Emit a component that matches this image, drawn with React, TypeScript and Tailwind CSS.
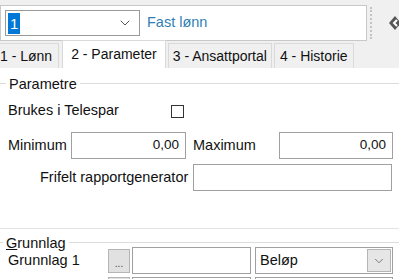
import { ChevronDown } from "lucide-react";

const font = { fontFamily: '"Liberation Sans", Arial, sans-serif' };

function Input({ value, className }: { value?: string; className: string }) {
  return (
    <div
      className={`flex h-[27px] items-center justify-end border border-[#a0a0a0] bg-white px-1.5 text-[13.5px] text-[#111] ${className}`}
    >
      {value}
    </div>
  );
}

export default function App() {
  return (
    <div className="h-[279px] w-[399px] overflow-hidden bg-white text-[14.5px] text-[#111]" style={font}>
      {/* top strip */}
      <div className="flex h-[41px] items-stretch bg-[#f0f0f0] pt-[5px]">
        <div className="flex w-[367px] items-center border border-[#c8c8c8] bg-white pl-[4px]">
          <div className="flex h-[26px] w-[135px] items-center border border-[#9a9a9a] bg-white pl-[2px] pr-[6px]">
            <span className="bg-[#0078d7] px-[2px] text-[15px] leading-[21px] text-white">1</span>
            <ChevronDown className="ml-auto h-4 w-4 text-[#555]" strokeWidth={1.5} />
          </div>
          <span className="ml-[7px] text-[14.5px] text-[#2f7fb5]">Fast lønn</span>
        </div>
        <div className="ml-[3px] mt-[2px] h-[32px] border-l-2 border-dotted border-[#c4c4c4]" />
        <div className="flex flex-1 items-center justify-end">
          <svg width="14" height="16" viewBox="0 0 14 16" className="mr-[-3px]">
            <path d="M7 1 L13 8 L7 15 L1 8 Z" fill="#555" />
            <path d="M9 5 L6 8 L9 11" stroke="#fff" strokeWidth="2" fill="none" />
          </svg>
        </div>
      </div>

      {/* tabs */}
      <div className="flex h-[27px] items-end bg-[#f0f0f0] text-[14px]">
        <div className="ml-[-4px] flex h-[25px] items-center border border-b-0 border-[#d9d9d9] bg-[#f0f0f0] pl-[3px] pr-[6px]">
          1 - Lønn
        </div>
        <div className="ml-[3px] flex h-[28px] items-center border border-b-0 border-[#d9d9d9] bg-white px-[8px]">
          2 - Parameter
        </div>
        <div className="ml-[2px] flex h-[25px] items-center border border-b-0 border-[#d9d9d9] bg-[#f0f0f0] px-[4px]">
          3 - Ansattportal
        </div>
        <div className="ml-[2px] flex h-[25px] items-center border border-b-0 border-[#d9d9d9] bg-[#f0f0f0] px-[5px]">
          4 - Historie
        </div>
      </div>

      {/* Parametre group */}
      <div className="relative mt-[15px] border-t border-[#dcdcdc] pt-[16px]">
        <span className="absolute left-[6px] top-[-10px] bg-white px-[3px]">Parametre</span>
        <div className="flex h-[22px] items-center pl-[8px]">
          <span className="w-[163px]">Brukes i Telespar</span>
          <div className="h-[13px] w-[13px] border border-[#333]" />
        </div>
        <div className="mt-[10px] flex items-center pl-[8px]">
          <span className="w-[63px]">Minimum</span>
          <Input value="0,00" className="w-[115px]" />
          <span className="ml-[7px] w-[86px]">Maximum</span>
          <Input value="0,00" className="w-[114px]" />
        </div>
        <div className="mt-[5px] flex items-center">
          <span className="ml-[40px] w-[153px]">Frifelt rapportgenerator</span>
          <Input className="w-[199px]" />
        </div>
      </div>

      {/* Grunnlag group */}
      <div className="mt-[37px] border-t border-[#e4e4e4]" />
      <div className="relative mt-[13px] border-t border-[#dcdcdc] pt-[4px]">
        <span className="absolute left-[3px] top-[-10px] bg-white px-[3px]">
          <span className="underline">G</span>runnlag
        </span>
        <div className="flex items-center">
          <span className="ml-[8px] w-[100px]">Grunnlag 1</span>
          <div className="flex h-[24px] w-[22px] items-end justify-center border border-[#b5b5b5] bg-[#e1e1e1] pb-[3px] text-[10px] leading-none text-[#444]">
            ...
          </div>
          <Input className="ml-[2px] w-[119px]" />
          <div className="ml-[4px] flex h-[27px] w-[138px] items-center border border-[#a0a0a0] bg-white pl-[4px] pr-[1px]">
            <span>Beløp</span>
            <div className="ml-auto flex h-[23px] w-[24px] items-center justify-center border border-[#b5b5b5] bg-[#e6e6e6]">
              <ChevronDown className="h-3.5 w-3.5 text-[#666]" strokeWidth={1.5} />
            </div>
          </div>
        </div>
        <div className="mt-[3px] flex">
          <div className="ml-[108px] h-[10px] w-[22px] border border-[#b5b5b5] bg-[#e1e1e1]" />
          <div className="ml-[2px] h-[10px] w-[119px] border border-[#a0a0a0]" />
          <div className="ml-[4px] h-[10px] w-[138px] border border-[#a0a0a0]" />
        </div>
      </div>
    </div>
  );
}
